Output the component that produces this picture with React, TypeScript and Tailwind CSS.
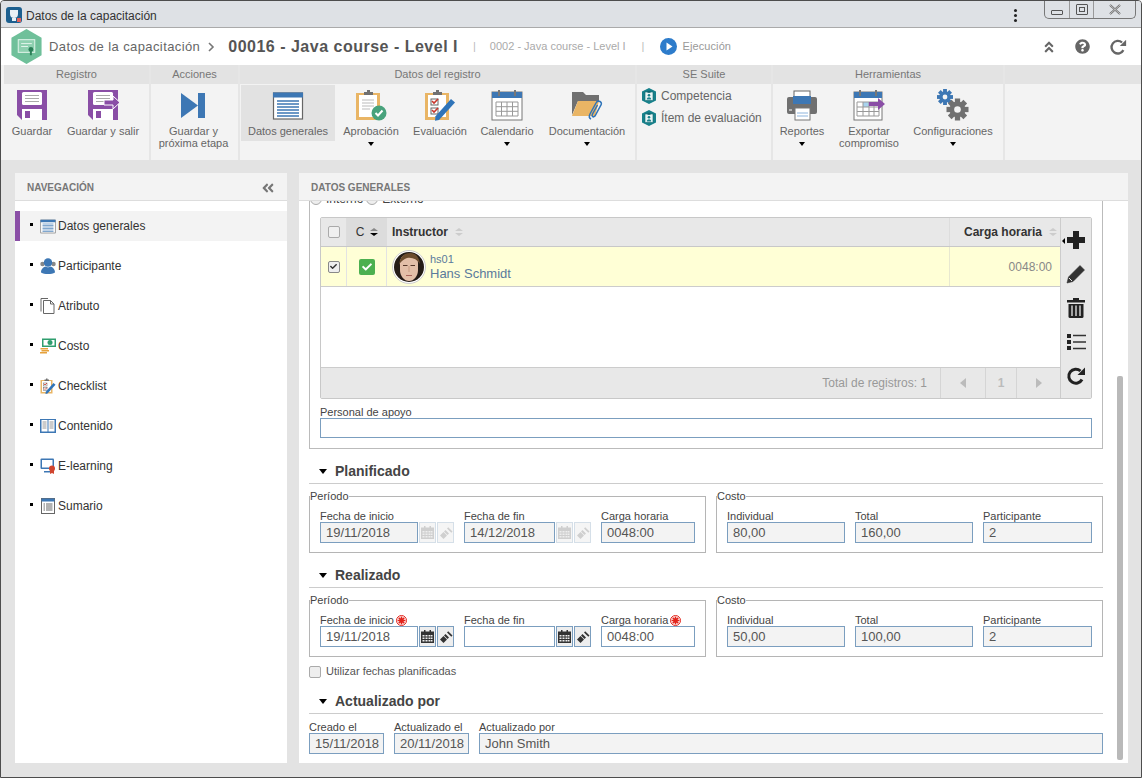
import { ReactNode } from 'react';
import { FaAngleDoubleLeft, FaAngleDoubleUp, FaCheck, FaQuestionCircle } from 'react-icons/fa';

const PURPLE = '#8a4ea6';
const BLUE = '#3d77b4';
const GREY = '#707070';
const ORANGE = '#e9b565';

function Svg({ size = 32, children }: { size?: number; children: ReactNode }) {
  return (
    <svg width={size} height={size} viewBox="0 0 32 32" className="block shrink-0">
      {children}
    </svg>
  );
}

function SaveIcon({ exit }: { exit?: boolean }) {
  return (
    <Svg>
      <path d="M1 1h30v30H6l-5-5z" fill={PURPLE} />
      <rect x="6" y="3" width="20" height="13" rx="1.5" fill="#fff" />
      <path d="M9 6.5h14M9 9.5h14M9 12.5h14" stroke="#aaa" strokeWidth="1" />
      <rect x="6" y="20" width="20" height="11" fill="#fff" />
      <rect x="9" y="22" width="5" height="7" fill={PURPLE} />
      {exit && <path d="M17 11h9V7l7 6.5-7 6.5v-4h-9z" fill={PURPLE} stroke="#fff" strokeWidth="1" />}
    </Svg>
  );
}

function NextIcon() {
  return (
    <Svg>
      <path d="M3 4l17 12.5L3 29z" fill={BLUE} />
      <rect x="20" y="4" width="7" height="25" fill={BLUE} />
    </Svg>
  );
}

function FormIcon({ size = 32 }: { size?: number }) {
  return (
    <Svg size={size}>
      <rect x="1.5" y="4" width="29" height="26" fill="#fff" stroke="#666" strokeWidth="1.2" />
      <rect x="1" y="3.5" width="30" height="5" fill={BLUE} />
      <path d="M5 12h22M5 15h22M5 18h22M5 21h22M5 24h22M5 27h22" stroke={BLUE} strokeWidth="1.3" />
    </Svg>
  );
}

function ApprovalIcon() {
  return (
    <Svg>
      <rect x="1" y="4" width="24" height="27" fill={ORANGE} />
      <rect x="4" y="6" width="18" height="22" fill="#fff" />
      <path d="M9 6V3h3V1h3v2h3v3z" fill={GREY} />
      <path d="M7 11h12M7 14h12M7 17h12M7 20h8" stroke="#bbb" strokeWidth="1" />
      <circle cx="24" cy="24" r="7.5" fill="#48a27c" />
      <path d="M20.5 24l2.5 2.5 4.5-5" stroke="#fff" strokeWidth="2" fill="none" />
    </Svg>
  );
}

function ChecklistIcon({ size = 32 }: { size?: number }) {
  return (
    <Svg size={size}>
      <rect x="1" y="4" width="24" height="27" fill={ORANGE} />
      <rect x="4" y="6" width="18" height="22" fill="#fff" />
      <path d="M9 6V3h3V1h3v2h3v3z" fill={GREY} />
      <rect x="7" y="10" width="7" height="6" fill="#fff" stroke="#666" />
      <rect x="7" y="19" width="7" height="6" fill="#fff" stroke="#666" />
      <path d="M8 12l2 2 4-4M8 21l2 2 4-4" stroke="#c9352b" strokeWidth="1.6" fill="none" />
      <path d="M27 10l4 3.5L15 31l-4 .8.5-4.5z" fill="#2f74b9" />
    </Svg>
  );
}

function CalendarIcon() {
  return (
    <Svg>
      <rect x="1" y="3" width="30" height="28" fill="#fff" stroke="#777" />
      <rect x="1" y="3" width="30" height="6" fill={BLUE} />
      <path d="M8 1v6M24 1v6" stroke="#777" strokeWidth="2" />
      <path d="M5 13h22v14H5zM5 17.7h22M5 22.3h22M10.5 13v14M16 13v14M21.5 13v14" stroke="#999" strokeWidth="1" fill="none" />
    </Svg>
  );
}

function FolderIcon() {
  return (
    <Svg>
      <path d="M1 26V3h11l3 3h13v6H7z" fill={GREY} />
      <path d="M1 27l6-15h21l-4 15z" fill={ORANGE} />
      <path d="M20 30c-2-1-2-3-1-5l6-11c1-2 3-2 4-1.500s2 2 1 3.500l-6 11c-1 1-2 1-2.500.5s-.5-1.500 0-2.500l5-9" stroke="#2f74b9" strokeWidth="1.500" fill="none" />
    </Svg>
  );
}

function PrinterIcon() {
  return (
    <Svg>
      <rect x="8" y="2" width="16" height="8" fill="#fff" stroke="#666" />
      <path d="M3 8h26a2 2 0 0 1 2 2v13a2 2 0 0 1-2 2H3a2 2 0 0 1-2-2V10a2 2 0 0 1 2-2z" fill={GREY} />
      <rect x="7" y="7" width="18" height="8" fill={BLUE} />
      <rect x="9" y="19" width="15" height="12" fill="#fff" stroke="#777" />
      <path d="M11 24h11M11 27h11" stroke="#8db4dd" strokeWidth="1" />
      <path d="M3 21h3" stroke="#fff" strokeWidth="1" />
    </Svg>
  );
}

function ExportIcon() {
  return (
    <Svg>
      <rect x="1" y="3" width="28" height="28" fill="#fff" stroke="#777" />
      <rect x="1" y="3" width="28" height="6" fill={BLUE} />
      <path d="M7 1v6M23 1v6" stroke="#777" strokeWidth="2" />
      <rect x="10" y="13" width="6" height="5" fill="#a9d3ee" />
      <path d="M4 13h22v14H4zM4 18h22M4 22.500h22M10 13v14M16 13v14M21 13v14" stroke="#999" strokeWidth="1" fill="none" />
      <path d="M16 13h9V9l7 6-7 6v-4h-9z" fill={PURPLE} />
    </Svg>
  );
}

function Gear({ cx, cy, r, fill }: { cx: number; cy: number; r: number; fill: string }) {
  const teeth = [0, 45, 90, 135];
  return (
    <g fill={fill}>
      {teeth.map((a) => (
        <rect key={a} x={cx - r * 0.24} y={cy - r} width={r * 0.48} height={r * 2} transform={`rotate(${a} ${cx} ${cy})`} />
      ))}
      <circle cx={cx} cy={cy} r={r * 0.72} />
      <circle cx={cx} cy={cy} r={r * 0.3} fill="#f3f3f3" />
    </g>
  );
}

function GearsIcon() {
  return (
    <Svg>
      <Gear cx={8} cy={8} r={8} fill={BLUE} />
      <Gear cx={20.500} cy={20.500} r={11} fill={GREY} />
    </Svg>
  );
}

function SuiteIcon() {
  return (
    <svg width="14" height="16" viewBox="0 0 14 16" className="block shrink-0">
      <path d="M7 0l7 3.500v9L7 16l-7-3.500v-9z" fill="#17818b" />
      <rect x="3" y="4" width="8" height="8.500" fill="#e9f5f5" stroke="#0f6670" strokeWidth=".6" />
      <rect x="5.500" y="2.800" width="3" height="2" fill="#0f6670" />
      <circle cx="7" cy="7.300" r="1.300" fill="#17818b" />
      <path d="M4.800 11.500c0-3 4.400-3 4.400 0z" fill="#17818b" />
    </svg>
  );
}

function PeopleIcon() {
  return (
    <Svg size={16}>
      <circle cx="5" cy="12" r="4.500" fill="#888" />
      <circle cx="27" cy="12" r="4.500" fill="#888" />
      <circle cx="16" cy="9" r="8.500" fill={BLUE} />
      <path d="M2 29c0-8 6-11 9-12 2 2 8 2 10 0 3 1 9 4 9 12-4 3-8 3-14 3s-10 0-14-3z" fill={BLUE} />
    </Svg>
  );
}

function DocIcon() {
  return (
    <Svg size={16}>
      <path d="M2 27V1h14" fill="none" stroke="#666" strokeWidth="2" />
      <path d="M7 31V5h14l7 7v19z" fill="#fff" stroke="#666" strokeWidth="2" />
      <path d="M21 5v7h7" fill="none" stroke="#666" strokeWidth="2" />
    </Svg>
  );
}

function MoneyIcon() {
  return (
    <Svg size={16}>
      <rect x="4" y="1" width="28" height="17" fill="#2f9e6e" />
      <rect x="7" y="4" width="22" height="11" fill="#fff" />
      <circle cx="20" cy="9" r="5" fill="#2f9e6e" />
      <path d="M1 20h15v3H1zM3 24h15v3H3zM0 28h14v3H0z" fill="#e6a23c" />
    </Svg>
  );
}

function BookIcon() {
  return (
    <Svg size={16}>
      <rect x="0" y="2" width="32" height="28" fill={BLUE} />
      <rect x="3" y="4" width="12" height="23" fill="#fff" />
      <rect x="17" y="4" width="12" height="23" fill="#fff" />
      <path d="M5 8h8M5 12h8M5 16h8M5 20h8M19 8h8M19 12h8M19 16h8M19 20h8" stroke="#777" strokeWidth="1.500" />
    </Svg>
  );
}

function ElearningIcon() {
  return (
    <Svg size={16}>
      <rect x="1" y="1" width="27" height="21" rx="2" fill={BLUE} />
      <rect x="4" y="4" width="21" height="15" fill="#fff" />
      <path d="M8 26h12v3H8z" fill={BLUE} />
      <circle cx="24" cy="21" r="6" fill="#d0452f" />
      <path d="M20 25v7l4-2 4 2v-7z" fill="#d0452f" />
    </Svg>
  );
}

function SummaryIcon() {
  return (
    <Svg size={16}>
      <rect x="3" y="1" width="26" height="30" fill="#fff" stroke="#666" strokeWidth="2" />
      <rect x="3" y="1" width="26" height="6" fill={BLUE} />
      <path d="M7 12h3M12 12h13M7 16h3M12 16h13M7 20h3M12 20h13M7 24h3M12 24h13" stroke="#555" strokeWidth="1.800" />
    </Svg>
  );
}

function Caret({ className = 'border-t-black' }: { className?: string }) {
  return <span className={`block h-0 w-0 border-x-[3.500px] border-t-[4px] border-x-transparent ${className}`} />;
}

function Sort({ active }: { active?: boolean }) {
  return (
    <span className="flex flex-col gap-[2px]">
      <span className={`block h-0 w-0 border-x-[4px] border-b-[3px] border-x-transparent ${active ? 'border-b-[#888]' : 'border-b-[#ccc]'}`} />
      <span className={`block h-0 w-0 border-x-[4px] border-t-[3px] border-x-transparent ${active ? 'border-t-black' : 'border-t-[#ccc]'}`} />
    </span>
  );
}

function RibbonItem({ icon, label, width, caret, active }: { icon: ReactNode; label: ReactNode; width: string; caret?: boolean; active?: boolean }) {
  return (
    <div className={`flex h-[56px] shrink-0 flex-col items-center pt-[4px] ${width} ${active ? 'bg-[#e2e2e2]' : ''}`}>
      {icon}
      <div className="mt-[4px] text-center text-[11px] leading-[12px] text-[#666] whitespace-nowrap">{label}</div>
      {caret && (
        <div className="mt-[5px]">
          <Caret />
        </div>
      )}
    </div>
  );
}

function RibbonGroup({ title, width, children }: { title: string; width: string; children?: ReactNode }) {
  return (
    <div className={`flex shrink-0 flex-col border-r-2 border-[#e6e6e6] ${width}`}>
      <div className="flex h-[19px] items-center justify-center bg-[#e3e3e3] text-[11px] text-[#777]">{title}</div>
      <div className="flex flex-1 pt-[1px]">{children}</div>
    </div>
  );
}

function CalendarMini({ color }: { color: string }) {
  return (
    <svg width="13" height="13" viewBox="0 0 13 13">
      <path d="M3 0h1.500v2H3zM8.500 0H10v2H8.500z" fill={color} />
      <path d="M0 1.500h13V13H0z" fill={color} />
      <path d="M1.500 5h2v1.500h-2zM4.500 5h2v1.500h-2zM7.500 5h2v1.500h-2zM10 5h1.500v1.500H10zM1.500 7.500h2V9h-2zM4.500 7.500h2V9h-2zM7.500 7.500h2V9h-2zM10 7.500h1.500V9H10zM1.500 10h2v1.500h-2zM4.500 10h2v1.500h-2zM7.500 10h2v1.500h-2zM10 10h1.500v1.500H10z" fill="#eee" />
    </svg>
  );
}

function BrushMini({ color }: { color: string }) {
  return (
    <svg width="14" height="14" viewBox="0 0 14 14">
      <path d="M8 1.500l1.200-1.200L13.500 4.500 12.300 5.700z" fill={color} transform="translate(0 1)" />
      <path d="M6.500 4l3.500 3.500-1.500 1.500L5 5.500z" fill={color} />
      <path d="M4.500 6L8 9.500 4.500 13 1 9.500z" fill={color} />
    </svg>
  );
}

function Required() {
  return (
    <svg width="11" height="11" viewBox="0 0 11 11" className="ml-[2px] shrink-0">
      <circle cx="5.500" cy="5.500" r="5" fill="#fff" stroke="#e2231a" strokeWidth="1" />
      <path d="M5.500 1.500v8M1.500 5.500h8M2.700 2.700l5.600 5.600M8.300 2.700L2.700 8.300" stroke="#e2231a" strokeWidth="1.600" />
    </svg>
  );
}

function Field({ label, value, width, white, required, tools }: { label: string; value?: string; width: string; white?: boolean; required?: 'on' | 'off'; tools?: 'on' | 'off' }) {
  const on = tools === 'on';
  return (
    <div className="flex flex-col">
      <div className="flex h-[12px] items-center text-[11px] leading-[12px] text-[#444] whitespace-nowrap">
        {label}
        {required === 'on' && <Required />}
      </div>
      <div className="flex gap-[1px]">
        <div className={`flex h-[21px] items-center border border-[#7b9ebf] px-[5px] text-[13px] text-[#555] ${width} ${white ? 'bg-white' : 'bg-[#f3f3f3]'}`}>{value}</div>
        {tools && (
          <>
            <div className={`flex h-[21px] w-[17px] items-center justify-center border ${on ? 'border-[#7b9ebf] bg-[#eeeeee]' : 'border-[#d5dfe8] bg-[#f5f5f5]'}`}>
              <CalendarMini color={on ? '#333' : '#cfcfcf'} />
            </div>
            <div className={`flex h-[21px] w-[17px] items-center justify-center border ${on ? 'border-[#7b9ebf] bg-[#eeeeee]' : 'border-[#d5dfe8] bg-[#f5f5f5]'}`}>
              <BrushMini color={on ? '#333' : '#cfcfcf'} />
            </div>
          </>
        )}
      </div>
    </div>
  );
}

function Section({ title }: { title: string }) {
  return (
    <div className="mt-[13px] flex h-[22px] items-start border-b border-[#ccc] pl-[10px]">
      <div className="flex h-[18px] items-center">
        <span className="block h-0 w-0 border-x-[4px] border-t-[5px] border-x-transparent border-t-black" />
        <span className="ml-[8px] text-[14px] font-bold text-[#444]">{title}</span>
      </div>
    </div>
  );
}

function Box({ legend, width, children }: { legend: string; width: string; children: ReactNode }) {
  return (
    <fieldset className={`border border-[#b5b5b5] ${width}`}>
      <legend className="text-[11px] leading-[12px] text-[#444]">{legend}</legend>
      <div className="flex gap-[10px] px-[10px] pb-[9px] pt-[8px]">{children}</div>
    </fieldset>
  );
}

function Period({ white, values }: { white?: boolean; values: string[] }) {
  const state = white ? 'on' : 'off';
  return (
    <div className="mt-[6px] flex gap-[10px]">
      <Box legend="Período" width="w-[397px]">
        <Field label="Fecha de inicio" value={values[0]} width="w-[98px]" white={white} tools={state} required={white ? 'on' : undefined} />
        <Field label="Fecha de fin" value={values[1]} width="w-[91px]" white={white} tools={state} />
        <Field label="Carga horaria" value="0048:00" width="w-[94px]" white={white} required={white ? 'on' : undefined} />
      </Box>
      <Box legend="Costo" width="w-[387px]">
        <Field label="Individual" value={values[2]} width="w-[118px]" />
        <Field label="Total" value={values[3]} width="w-[118px]" />
        <Field label="Participante" value="2" width="w-[109px]" />
      </Box>
    </div>
  );
}

function Avatar() {
  return (
    <svg width="34" height="34" viewBox="0 0 34 34" className="block shrink-0">
      <circle cx="17" cy="17" r="16.500" fill="#fff" stroke="#ccc" />
      <clipPath id="face">
        <circle cx="17" cy="17" r="15" />
      </clipPath>
      <g clipPath="url(#face)">
        <rect width="34" height="34" fill="#241c17" />
        <path d="M8 13c0-6 4-9 9-9s9 3 9 9v7c0 6-4 11-9 11s-9-5-9-11z" fill="#e3bfa8" />
        <path d="M7 15c1-8 5-12 11-12s9 4 10 11c-3-5-8-7-13-6-3 1-6 3-8 7z" fill="#6b4c2e" />
        <path d="M11 15.500h4.500M18.500 15.500h4.500" stroke="#55372a" strokeWidth="1" />
        <path d="M17 16v6" stroke="#c79b82" strokeWidth="1" />
        <path d="M14 25.500h6" stroke="#a8655c" strokeWidth="1.200" />
      </g>
    </svg>
  );
}

const ToolIcons = [
  <svg key="plus" width="18" height="18" viewBox="0 0 18 18">
    <path d="M6 0h6v6h6v6h-6v6H6v-6H0V6h6z" fill="#222" />
  </svg>,
  <svg key="pen" width="20" height="20" viewBox="0 0 20 20">
    <path d="M14 1.500l4.500 4.500L7 17.500 1 19l1.500-6zM3.500 13.500l3 3" fill="#333" stroke="#333" strokeWidth=".6" />
    <path d="M3 14l3 3" stroke="#e8e8e8" strokeWidth="1" />
  </svg>,
  <svg key="trash" width="18" height="20" viewBox="0 0 18 20">
    <path d="M6 0h6v2h6v2.500H0V2h6z" fill="#222" />
    <path d="M1.500 6h15v12.500A1.500 1.500 0 0 1 15 20H3a1.500 1.500 0 0 1-1.500-1.500z" fill="#222" />
    <path d="M5 7.500V18M9 7.500V18M13 7.500V18" stroke="#e8e8e8" strokeWidth="1.300" />
  </svg>,
  <svg key="list" width="19" height="18" viewBox="0 0 19 18">
    <path d="M0 1h4v4H0zM0 7h4v4H0zM0 13h4v4H0z" fill="#222" />
    <path d="M6 2.500h13M6 9h13M6 15.500h13" stroke="#333" strokeWidth="1.300" />
  </svg>,
  <svg key="redo" width="20" height="20" viewBox="0 0 20 20">
    <path d="M16 13.500A7 7 0 1 1 14.500 5" fill="none" stroke="#222" strokeWidth="3" />
    <path d="M19 1.500V9h-7.500z" fill="#222" />
  </svg>,
];

const NAV: { label: string; icon: ReactNode }[] = [
  { label: 'Datos generales', icon: <FormIcon size={16} /> },
  { label: 'Participante', icon: <PeopleIcon /> },
  { label: 'Atributo', icon: <DocIcon /> },
  { label: 'Costo', icon: <MoneyIcon /> },
  { label: 'Checklist', icon: <ChecklistIcon size={16} /> },
  { label: 'Contenido', icon: <BookIcon /> },
  { label: 'E-learning', icon: <ElearningIcon /> },
  { label: 'Sumario', icon: <SummaryIcon /> },
];

function TitleBar() {
  return (
    <div className="flex h-[27px] shrink-0 items-start border-b border-[#aaa] bg-[#dee1e5] pl-[5px]">
      <svg width="16" height="16" viewBox="0 0 16 16" className="mt-[6px] shrink-0">
        <rect width="16" height="16" rx="3" fill="#1c5f8f" />
        <path d="M4 3h8v4c0 3-2 4-4 4s-4-1-4-4z" fill="#e8f0f6" />
        <rect x="6" y="11" width="4" height="3" fill="#e8f0f6" />
        <rect x="11" y="11" width="4" height="4" fill="#e0605a" />
      </svg>
      <span className="mt-[8px] ml-[4px] text-[12px] leading-[14px] text-[#333]">Datos de la capacitación</span>
      <div className="ml-auto mt-[8px] flex flex-col gap-[2px]">
        <span className="block h-[3px] w-[3px] rounded-full bg-[#222]" />
        <span className="block h-[3px] w-[3px] rounded-full bg-[#222]" />
        <span className="block h-[3px] w-[3px] rounded-full bg-[#222]" />
      </div>
      <div className="mr-[5px] ml-[27px] flex h-[18px] w-[92px] rounded-b-[5px] border border-t-0 border-[#777] text-[#555]">
        <div className="flex w-[25px] items-end justify-center border-r border-[#999] pb-[3px]">
          <span className="block h-[5px] w-[12px] rounded-[1px] border border-[#555]" />
        </div>
        <div className="flex w-[24px] items-center justify-center border-r border-[#999]">
          <span className="flex h-[11px] w-[12px] items-center justify-center rounded-[1px] border border-[#555]">
            <span className="block h-[5px] w-[6px] border border-[#555]" />
          </span>
        </div>
        <div className="flex flex-1 items-center justify-center">
          <svg width="12" height="11" viewBox="0 0 12 11">
            <path d="M1 1l10 9M11 1L1 10" stroke="#666" strokeWidth="2" />
            <path d="M1 1l10 9M11 1L1 10" stroke="#eee" strokeWidth=".7" />
          </svg>
        </div>
      </div>
    </div>
  );
}

function Header() {
  return (
    <div className="flex h-[37px] shrink-0 items-center bg-white pl-[10px]">
      <svg width="31" height="35" viewBox="0 0 31 36" className="z-10 shrink-0">
        <path d="M15.500 0L31 9v18l-15.500 9L0 27V9z" fill="#6fc09a" />
        <rect x="7" y="11" width="17" height="13" fill="#8ed0b0" stroke="#e4f5ec" strokeWidth="1" />
        <path d="M10 15h11M10 18h7" stroke="#e4f5ec" strokeWidth="1" />
        <circle cx="20" cy="21" r="2.500" fill="#2b7f58" />
        <rect x="19" y="22" width="2" height="5" fill="#2b7f58" />
      </svg>
      <span className="ml-[7px] text-[13px] tracking-[0.4px] text-[#666]">Datos de la capacitación</span>
      <svg width="8" height="10" viewBox="0 0 8 10" className="ml-[7px]">
        <path d="M2 1l4 4-4 4" stroke="#777" strokeWidth="1.600" fill="none" />
      </svg>
      <span className="ml-[13px] text-[16px] font-bold tracking-[0.5px] text-[#555]">00016 - Java course - Level I</span>
      <span className="ml-[15px] text-[11px] text-[#bbb]">|</span>
      <span className="ml-[14px] text-[11px] text-[#aaa]">0002 - Java course - Level I</span>
      <span className="ml-[16px] text-[11px] text-[#bbb]">|</span>
      <svg width="17" height="17" viewBox="0 0 17 17" className="ml-[16px]">
        <circle cx="8.500" cy="8.500" r="8.500" fill="#2d7ccb" />
        <path d="M6.500 4.500l6 4-6 4z" fill="#fff" />
      </svg>
      <span className="ml-[5px] text-[11px] tracking-[0.1px] text-[#999]">Ejecución</span>
      <div className="ml-auto flex items-center gap-[19px] pr-[14px] text-[#666]">
        <FaAngleDoubleUp size={14} />
        <FaQuestionCircle size={15} />
        <svg width="18" height="18" viewBox="0 0 20 20">
          <path d="M16 13.500A7 7 0 1 1 14.500 5" fill="none" stroke="#666" strokeWidth="2.600" />
          <path d="M19 2v7h-7z" fill="#666" />
        </svg>
      </div>
    </div>
  );
}

function Ribbon() {
  return (
    <div className="flex h-[95px] shrink-0 bg-[#f3f3f3] pl-[3px]">
      <RibbonGroup title="Registro" width="w-[147px]">
        <RibbonItem icon={<SaveIcon />} label="Guardar" width="w-[56px]" />
        <RibbonItem icon={<SaveIcon exit />} label="Guardar y salir" width="w-[86px]" />
      </RibbonGroup>
      <RibbonGroup title="Acciones" width="w-[89px]">
        <RibbonItem icon={<NextIcon />} label={<>Guardar y<br />próxima etapa</>} width="w-[85px]" />
      </RibbonGroup>
      <RibbonGroup title="Datos del registro" width="w-[397px]">
        <div className="w-[1px] shrink-0" />
        <RibbonItem icon={<FormIcon />} label="Datos generales" width="w-[94px]" active />
        <RibbonItem icon={<ApprovalIcon />} label="Aprobación" width="w-[72px]" caret />
        <RibbonItem icon={<ChecklistIcon />} label="Evaluación" width="w-[66px]" />
        <RibbonItem icon={<CalendarIcon />} label="Calendario" width="w-[68px]" caret />
        <RibbonItem icon={<FolderIcon />} label="Documentación" width="w-[92px]" caret />
      </RibbonGroup>
      <RibbonGroup title="SE Suite" width="w-[136px]">
        <div className="flex flex-col gap-[6px] pl-[5px] pt-[3px]">
          {['Competencia', 'Ítem de evaluación'].map((t) => (
            <div key={t} className="flex h-[16px] items-center gap-[5px] text-[12px] text-[#666]">
              <SuiteIcon />
              {t}
            </div>
          ))}
        </div>
      </RibbonGroup>
      <RibbonGroup title="Herramientas" width="w-[232px]">
        <RibbonItem icon={<PrinterIcon />} label="Reportes" width="w-[58px]" caret />
        <RibbonItem icon={<ExportIcon />} label={<>Exportar<br />compromiso</>} width="w-[76px]" />
        <RibbonItem icon={<GearsIcon />} label="Configuraciones" width="w-[92px]" caret />
      </RibbonGroup>
      <div className="h-[19px] flex-1 bg-[#e3e3e3]" />
    </div>
  );
}

function Nav() {
  return (
    <div className="flex w-[272px] shrink-0 flex-col rounded-t-[3px] bg-white">
      <div className="flex h-[28px] shrink-0 items-center justify-between border-b border-[#ddd] bg-[#f3f3f3] pl-[12px] pr-[12px] pt-[2px] text-[10px] font-bold text-[#777]">
        NAVEGACIÓN
        <FaAngleDoubleLeft size={14} color="#777" />
      </div>
      <div className="flex flex-col gap-[10px] pt-[10px]">
        {NAV.map((n, i) => (
          <div key={n.label} className={`flex h-[30px] items-center text-[12px] text-[#333] ${i === 0 ? 'border-l-[5px] border-[#8a4ea6] bg-[#f3f3f3] pl-[10px]' : 'pl-[15px]'}`}>
            <span className="mb-[3px] block h-[3px] w-[3px] bg-black" />
            <span className="ml-[7px] mr-[2px]">{n.icon}</span>
            {n.label}
          </div>
        ))}
      </div>
    </div>
  );
}

function Grid() {
  return (
    <div className="flex h-[182px] rounded-[2px] border border-[#c8c8c8] bg-white">
      <div className="flex min-w-0 flex-1 flex-col">
        <div className="flex h-[29px] shrink-0 border-b border-[#c8c8c8] bg-[#e8e8e8] text-[12px] font-bold text-[#333]">
          <div className="flex w-[26px] items-center justify-center border-r border-[#ddd]">
            <span className="block h-[12px] w-[12px] rounded-[2px] border border-[#aaa] bg-[#f0f0f0]" />
          </div>
          <div className="flex w-[40px] items-center justify-center gap-[6px] bg-[#dcdcdc] font-normal">
            C <Sort active />
          </div>
          <div className="flex flex-1 items-center gap-[7px] pl-[5px]">
            Instructor <Sort />
          </div>
          <div className="flex w-[111px] items-center justify-end gap-[7px] border-l border-[#ddd] pr-[3px]">
            Carga horaria <Sort />
          </div>
        </div>
        <div className="flex h-[40px] shrink-0 border-b border-[#ccc] bg-[#ffffd6]">
          <div className="flex w-[26px] items-center justify-center border-r border-[#e3e3e3]">
            <span className="flex h-[12px] w-[12px] items-center justify-center rounded-[2px] border border-[#888] bg-[#eee] text-[#333]">
              <FaCheck size={7} />
            </span>
          </div>
          <div className="flex w-[40px] items-center justify-center border-r border-[#e3e3e3]">
            <span className="flex h-[16px] w-[16px] items-center justify-center rounded-[2px] bg-[#4cb050] text-white">
              <FaCheck size={10} />
            </span>
          </div>
          <div className="flex flex-1 items-center pl-[5px]">
            <Avatar />
            <div className="ml-[4px] mt-[-1px] text-[#5a7a9c]">
              <div className="text-[11px] leading-[14px]">hs01</div>
              <div className="text-[13px] leading-[15px]">Hans Schmidt</div>
            </div>
          </div>
          <div className="flex w-[111px] items-center justify-end border-l border-[#e8e8d0] pr-[8px] text-[12px] text-[#888]">0048:00</div>
        </div>
        <div className="flex-1" />
        <div className="flex h-[31px] shrink-0 items-stretch justify-end border-t border-[#ccc] bg-[#e8e8e8] text-[12px] text-[#999]">
          <div className="flex items-center pr-[13px]">Total de registros: 1</div>
          <div className="flex w-[45px] items-center justify-center border-l border-[#d5d5d5]">
            <span className="block h-0 w-0 border-y-[5px] border-r-[6px] border-y-transparent border-r-[#bbb]" />
          </div>
          <div className="flex w-[31px] items-center justify-center border-l border-[#d5d5d5] font-bold text-[#bbb]">1</div>
          <div className="flex w-[44px] items-center justify-center border-l border-[#d5d5d5]">
            <span className="block h-0 w-0 border-y-[5px] border-l-[6px] border-y-transparent border-l-[#bbb]" />
          </div>
        </div>
      </div>
      <div className="relative flex w-[31px] shrink-0 flex-col items-center border-l border-[#ccc] bg-[#e8e8e8] pt-[5px]">
        <span className="absolute left-[1px] top-[20px] block h-0 w-0 border-y-[3px] border-r-[3px] border-y-transparent border-r-black" />
        {ToolIcons.map((ic, i) => (
          <div key={i} className="flex h-[34px] w-full items-center justify-center">{ic}</div>
        ))}
      </div>
    </div>
  );
}

function Content() {
  return (
    <div className="flex min-w-0 flex-1 flex-col rounded-t-[3px] bg-white">
      <div className="flex h-[28px] shrink-0 items-center border-b border-[#ddd] bg-[#f3f3f3] pl-[12px] pt-[2px] text-[10px] font-bold text-[#777]">DATOS GENERALES</div>
      <div className="flex min-h-0 flex-1 overflow-hidden pl-[10px]">
        <div className="w-[794px] shrink-0">
          <div className="-mt-[8px] border-x border-b border-[#bbb] px-[10px] pb-[10px]">
            <div className="-ml-[10px] flex h-[12px] items-center text-[12px] text-[#444]">
              <span className="block h-[12px] w-[12px] rounded-full border border-[#aaa] bg-[#eee] p-[3px]">
                <span className="block h-full w-full rounded-full bg-[#555]" />
              </span>
              <span className="ml-[4px]">Interno</span>
              <span className="ml-[3px] block h-[12px] w-[12px] rounded-full border border-[#aaa] bg-[#eee]" />
              <span className="ml-[4px]">Externo</span>
            </div>
            <div className="mt-[12px]">
              <Grid />
            </div>
            <div className="mt-[7px] h-[12px] text-[11px] leading-[12px] text-[#444]">Personal de apoyo</div>
            <div className="h-[20px] border border-[#7b9ebf]" />
          </div>
          <Section title="Planificado" />
          <Period values={['19/11/2018', '14/12/2018', '80,00', '160,00']} />
          <Section title="Realizado" />
          <Period white values={['19/11/2018', '', '50,00', '100,00']} />
          <label className="mt-[8px] flex h-[13px] items-center text-[11px] text-[#555]">
            <span className="block h-[12px] w-[12px] rounded-[2px] border border-[#aaa] bg-[#eee]" />
            <span className="ml-[5px]">Utilizar fechas planificadas</span>
          </label>
          <div className="pt-[1px]">
            <Section title="Actualizado por" />
          </div>
          <div className="mt-[7px] flex gap-[10px]">
            <Field label="Creado el" value="15/11/2018" width="w-[75px]" />
            <Field label="Actualizado el" value="20/11/2018" width="w-[75px]" />
            <Field label="Actualizado por" value="John Smith" width="w-[624px]" />
          </div>
        </div>
        <div className="ml-[14px] flex w-[6px] shrink-0 flex-col pt-[175px] pb-[3px]">
          <div className="flex-1 rounded-[2px] bg-[#b9b9b9]" />
        </div>
      </div>
    </div>
  );
}

export default function App() {
  return (
    <div className="flex h-[778px] w-[1142px] flex-col overflow-hidden rounded-t-[4px] border border-[#4d4d4d] bg-[#e3e3e3] font-['Liberation_Sans',Arial,sans-serif]">
      <TitleBar />
      <Header />
      <Ribbon />
      <div className="flex min-h-0 flex-1 gap-[12px] pt-[13px] pb-[14px] pl-[14px] pr-[13px]">
        <Nav />
        <Content />
      </div>
    </div>
  );
}
